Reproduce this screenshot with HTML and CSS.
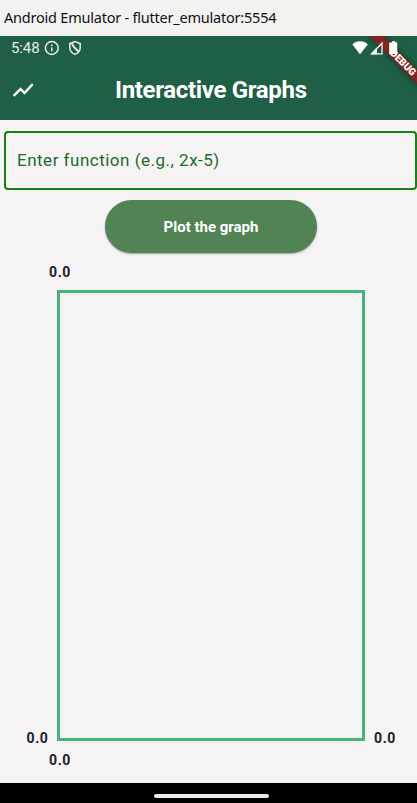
FILE: index.html
```html
<!DOCTYPE html>
<html lang="en">
<head>
<meta charset="utf-8">
<title>Interactive Graphs</title>
<link rel="stylesheet" href="styles.css">
</head>
<body>
<div class="window">
  <div class="titlebar"><span class="window-title">Android Emulator - flutter_emulator:5554</span></div>
  <header class="header">
    <div class="statusbar">
      <span class="clock">5:48</span>
      <svg class="info" width="16" height="16" viewBox="0 0 16 16" fill="none" stroke="#e8efeb" stroke-width="1.5"><circle cx="7.8" cy="8" r="6.4"/><path d="M7.8 7.2v4.1M7.8 4.5v1.5"/></svg>
      <svg class="shield" width="14" height="16" viewBox="0 0 14 16" fill="none" stroke="#e8efeb" stroke-width="1.5"><path d="M7 1.6 12.2 3.5v4c0 3.2-2 5.7-5.2 6.9-3.2-1.2-5.2-3.7-5.2-6.9v-4z"/><path d="M4.2 3.2C4.4 6.8 7.6 8.2 10.4 11.6" stroke-width="2"/></svg>
    </div>
    <div class="appbar">
      <svg class="trend" width="24" height="24" viewBox="0 0 24 24" fill="#fff" stroke="#fff" stroke-width=".4"><path d="M3.5 18.49l6-6.01 4 4L22.3 6.92l-1.41-1.41-7.39 7.97-4-4L2 16.99z"/></svg>
      <h1 class="title">Interactive Graphs</h1>
    </div>
    <div class="ribbon-clip"><div class="ribbon">DEBUG</div></div>
    <svg class="signals" width="50" height="20" viewBox="0 0 50 20" fill="#fff">
      <path d="M0.4 8.4Q3 5.2 8 5.2t7.8 3.2L8 18.2z"/>
      <path d="M30 7.2v10.6H19.6z" fill="none" stroke="#fff" stroke-width="1.3"/><path d="M18.5 18.3 25 11.6V18.3z"/>
      <path d="M40 5.2h3.4v1.3h1.8V18h-8V6.5H40z"/>
    </svg>
  </header>
  <main class="content">
    <div class="field"><span class="placeholder">Enter function (e.g., 2x-5)</span></div>
    <button class="plot"><span>Plot the graph</span></button>
    <section class="graph">
      <span class="num top">0.0</span>
      <span class="num left">0.0</span>
      <div class="canvas"></div>
      <span class="num right">0.0</span>
      <span class="num bottom">0.0</span>
    </section>
  </main>
  <footer class="navbar"><div class="handle"></div></footer>
</div>
</body>
</html>
```
FILE: styles.css
```css
* { box-sizing: border-box; }
body { margin: 0; background: #f5f3f4; font-family: Roboto, sans-serif; }
.window { width: 417px; height: 803px; display: flex; flex-direction: column; overflow: hidden; }
.titlebar { height: 36px; padding: 0 0 2px 4px; display: flex; align-items: center; background: linear-gradient(90deg, #f2f2f2, #f3f2ee); }
.window-title { font: 14.5px/20px "Noto Sans", sans-serif; letter-spacing: -0.22px; color: #111; white-space: nowrap; }
.header { position: relative; height: 84px; background: #1e5f46; color: #fff; }
.statusbar { height: 24px; padding-left: 11px; display: flex; align-items: center; }
.clock { width: 33px; font-size: 15px; line-height: 24px; letter-spacing: -0.1px; color: #e8efeb; }
.shield { margin-left: 8px; }
.appbar { height: 60px; display: grid; grid-template-columns: 104px 1fr; align-items: center; padding-left: 11px; }
.title { margin: 0; font-size: 24px; line-height: 28px; font-weight: 700; letter-spacing: -0.33px; white-space: nowrap; }
.ribbon-clip { position: absolute; inset: 0; overflow: hidden; }
.ribbon { position: absolute; left: 360.5px; top: 21.5px; width: 84px; height: 10px; transform: rotate(45deg); background: #7f2727; box-shadow: 0 0 5px rgba(0, 0, 0, .5); font-size: 10px; line-height: 10px; font-weight: 900; text-align: center; }
.signals { position: absolute; left: 352px; top: 0; }
.content { height: 663px; display: flex; flex-direction: column; }
.field { height: 59px; margin: 11px 0 0 4px; padding: 0 0 2px 11px; border: 2px solid #168216; border-radius: 4px; display: flex; align-items: center; }
.placeholder { font-size: 17px; line-height: 20px; letter-spacing: 0.5px; color: #1c6a2c; white-space: nowrap; }
.plot { width: 212px; height: 53px; margin: 10px 0 0 105px; padding: 0; border: 0; border-radius: 27px; background: #528355; box-shadow: 0 1px 2px rgba(0, 0, 0, .35); color: #fff; font: 700 15px/20px Roboto, sans-serif; }
.graph { margin-top: 8px; display: grid; grid-template-columns: 57px 308px 52px; grid-template-rows: 29px 451px 38px; }
.num { font-size: 14px; line-height: 20px; font-weight: 700; letter-spacing: 0.6px; color: #222026; }
.top { grid-area: 1 / 1 / 2 / 3; margin: 1px 0 0 49px; }
.left { grid-area: 2 / 1; align-self: end; margin: 0 0 -7px 26.5px; }
.canvas { grid-area: 2 / 2; border: 3px solid #48b47c; }
.right { grid-area: 2 / 3; align-self: end; margin: 0 0 -7px 9px; }
.bottom { grid-area: 3 / 1 / 4 / 3; margin: 9px 0 0 49px; }
.navbar { height: 20px; background: #000; display: flex; justify-content: center; }
.handle { width: 115px; height: 4px; margin: 11px 0 0 5px; border-radius: 2px; background: #e8e8e8; }
```
